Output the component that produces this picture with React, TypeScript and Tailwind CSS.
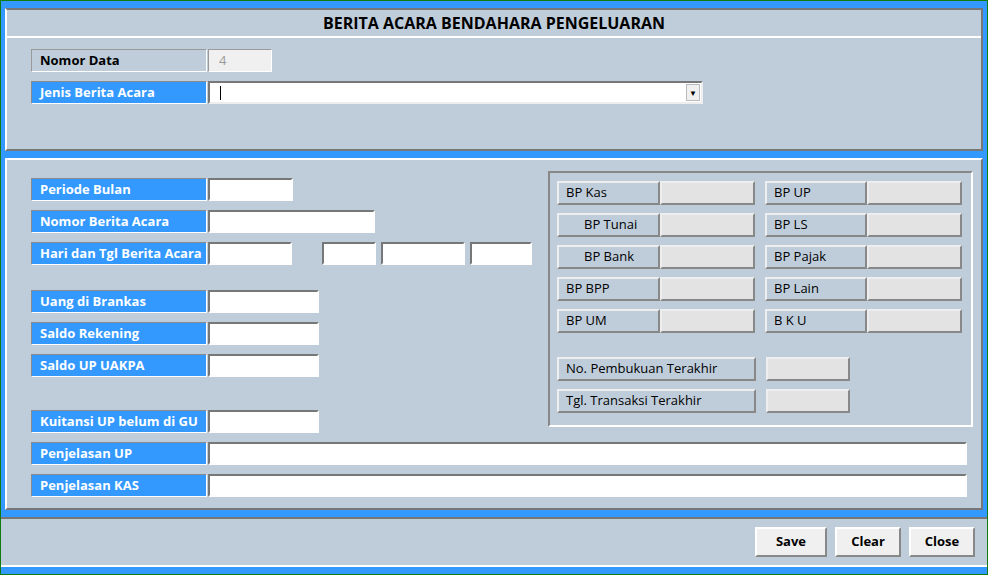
import React from "react";

const F = { fontFamily: '"Open Sans", "Noto Sans", sans-serif' };
const bevel = "border border-t-[#8a8a8a] border-l-[#8a8a8a] border-b-white border-r-white";

function BLabel({ t }: { t: string }) {
  return (
    <div className={`w-[176px] h-[23px] bg-[#3399ff] text-white font-bold text-[13px] flex items-center pl-[8px] ${bevel}`}>{t}</div>
  );
}
function Input({ w, bg = "bg-white" }: { w: number; bg?: string }) {
  return <div className={`h-[23px] ${bg} ${bevel} border-2 border-t-[#777] border-l-[#777] border-b-[#eee] border-r-[#eee]`} style={{ width: w }} />;
}
function GLabel({ t, w, center }: { t: string; w: number; center?: boolean }) {
  return (
    <div className={`h-[24px] bg-[#bfcddb] text-black text-[13px] flex items-center ${center ? "pl-[25px]" : "pl-[7px]"} border-2 border-t-[#eee] border-l-[#eee] border-b-[#888] border-r-[#888]`} style={{ width: w }}>{t}</div>
  );
}
function GField({ w }: { w: number }) {
  return <div className="h-[24px] bg-[#e3e3e3] border-2 border-t-[#eee] border-l-[#eee] border-b-[#888] border-r-[#888]" style={{ width: w }} />;
}
function Btn({ t, w }: { t: string; w: number }) {
  return <div className="h-[30px] bg-[#f0f0f0] border-2 border-t-white border-l-white border-b-[#888] border-r-[#888] flex items-center justify-center font-bold text-[13px]" style={{ width: w }}>{t}</div>;
}

export default function App() {
  return (
    <div style={F} className="w-[988px] h-[575px] bg-[#3399ff] border border-[#107c10] flex flex-col overflow-hidden">
      <div className="mx-[4px] mt-[7px] h-[143px] bg-[#bfcddb] border-2 border-t-[#777] border-l-white border-b-[#777] border-r-[#777] flex flex-col">
        <div className="h-[28px] border-b-2 border-b-white flex items-center justify-center font-bold text-[16px] text-black">BERITA ACARA BENDAHARA PENGELUARAN</div>
        <div className="pl-[24px] pt-[11px] flex flex-col gap-[9px]">
          <div className="flex gap-[1px]">
            <div className={`w-[176px] h-[23px] bg-[#bfcddb] font-bold text-[13px] flex items-center pl-[8px] border border-t-[#999] border-l-[#999] border-b-white border-r-white`}>Nomor Data</div>
            <div className="w-[64px] h-[23px] bg-[#f0f0f0] border border-t-[#999] border-l-[#999] border-b-white border-r-white text-[#999] text-[13px] flex items-center pl-[10px]">4</div>
          </div>
          <div className="flex gap-[1px]">
            <BLabel t="Jenis Berita Acara" />
            <div className="w-[495px] h-[23px] bg-white border-2 border-t-[#777] border-l-[#777] border-b-[#eee] border-r-[#eee] flex items-center">
              <div className="ml-[10px] w-[1px] h-[14px] bg-black" />
              <div className="ml-auto mr-[1px] w-[14px] h-[17px] bg-[#f0f0f0] border border-[#bbb] flex items-center justify-center text-[8px]">▼</div>
            </div>
          </div>
        </div>
      </div>
      <div className="mx-[4px] mt-[7px] h-[352px] bg-[#bfcddb] border-2 border-t-white border-l-white border-b-[#777] border-r-[#777] flex pl-[24px] pt-[18px]">
        <div className="flex flex-col w-[511px]">
          <div className="flex flex-col gap-[9px]">
            <div className="flex gap-[1px]"><BLabel t="Periode Bulan" /><Input w={85} /></div>
            <div className="flex gap-[1px]"><BLabel t="Nomor Berita Acara" /><Input w={167} /></div>
            <div className="flex gap-[1px]"><BLabel t="Hari dan Tgl Berita Acara" /><Input w={84} /><div className="w-[28px]" /><Input w={54} /><div className="w-[3px]" /><Input w={84} /><div className="w-[3px]" /><Input w={62} /></div>
          </div>
          <div className="flex flex-col gap-[9px] mt-[25px]">
            <div className="flex gap-[1px]"><BLabel t="Uang di Brankas" /><Input w={111} /></div>
            <div className="flex gap-[1px]"><BLabel t="Saldo Rekening" /><Input w={111} /></div>
            <div className="flex gap-[1px]"><BLabel t="Saldo UP UAKPA" /><Input w={111} /></div>
          </div>
          <div className="flex flex-col gap-[9px] mt-[33px] w-[936px]">
            <div className="flex gap-[1px]"><BLabel t="Kuitansi UP belum di GU" /><Input w={111} /></div>
            <div className="flex gap-[1px]"><BLabel t="Penjelasan UP" /><Input w={759} /></div>
            <div className="flex gap-[1px]"><BLabel t="Penjelasan KAS" /><Input w={759} /></div>
          </div>
        </div>
        <div className="ml-[6px] mt-[-7px] w-[425px] h-[256px] border-2 border-t-[#888] border-l-[#888] border-b-white border-r-white pl-[7px] pt-[8px] flex flex-col gap-[8px]">
          {[["BP Kas", "BP UP", false], ["BP Tunai", "BP LS", true], ["BP Bank", "BP Pajak", true], ["BP BPP", "BP Lain", false], ["BP UM", "B K U", false]].map(([a, b, c]) => (
            <div key={a as string} className="flex">
              <GLabel t={a as string} w={103} center={c as boolean} /><GField w={95} />
              <div className="w-[10px]" />
              <GLabel t={b as string} w={102} /><GField w={95} />
            </div>
          ))}
          <div className="flex mt-[16px]"><GLabel t="No. Pembukuan Terakhir" w={199} /><div className="w-[10px]" /><GField w={84} /></div>
          <div className="flex"><GLabel t="Tgl. Transaksi Terakhir" w={199} /><div className="w-[10px]" /><GField w={84} /></div>
        </div>
      </div>
      <div className="mt-[7px] h-[50px] bg-[#bfcddb] border-t-2 border-t-[#777] border-b-2 border-b-white flex items-center justify-end gap-[8px] pr-[12px]">
        <Btn t="Save" w={72} /><Btn t="Clear" w={66} /><Btn t="Close" w={66} />
      </div>
    </div>
  );
}
